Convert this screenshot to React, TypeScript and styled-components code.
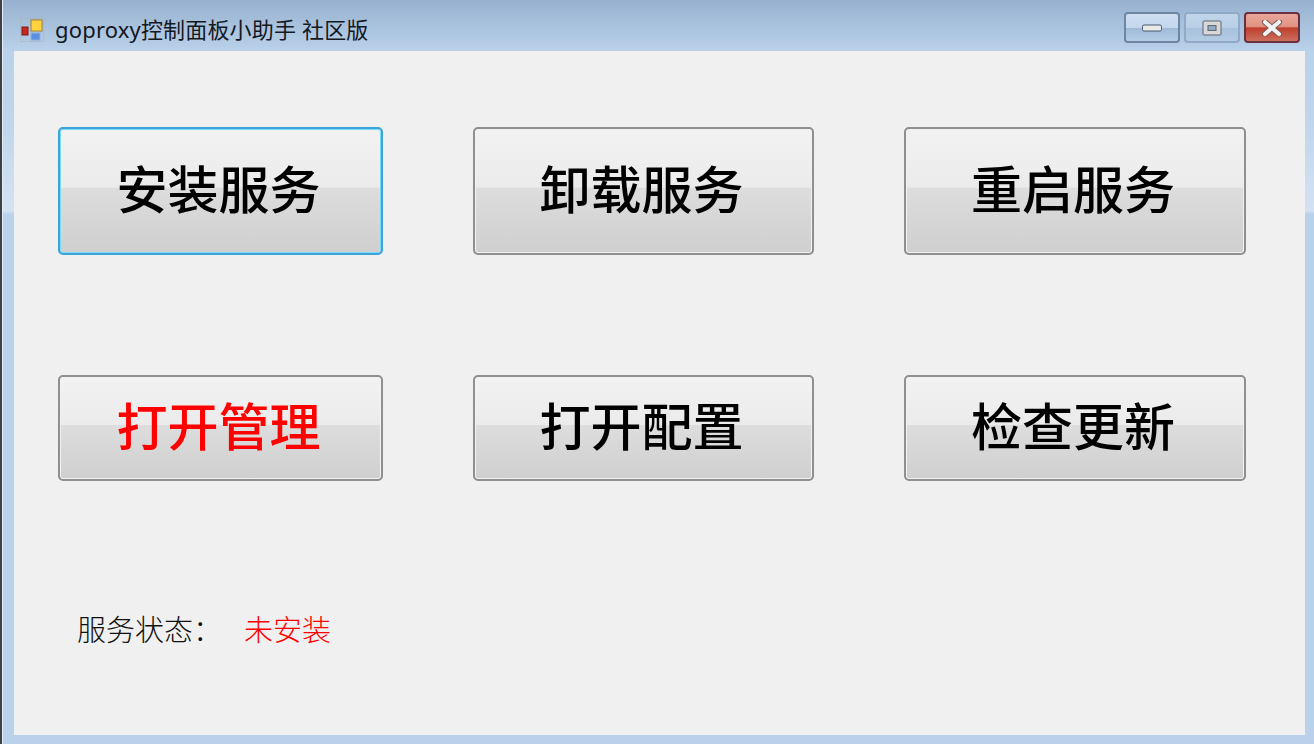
import React from 'react';
import styled, { createGlobalStyle } from 'styled-components';

const GlobalStyle = createGlobalStyle`
  html, body {
    margin: 0;
    padding: 0;
    background: #b9d1ea;
  }
`

const Window = styled.div`
  display: flex;
  flex-direction: column;
  box-sizing: border-box;
  width: 1314px;
  height: 744px;
  overflow: hidden;
  padding: 0 9px 9px 14px;
  box-shadow: inset 2px 0 0 #3c4248, inset 3px 0 0 #e4edf6;
  background: linear-gradient(180deg, #97b1cf 0, #b9d1ea 51px, #bfd5ec 120px, #d3e2f3 211px, #b9d1ea 214px);
`

const TitleBar = styled.div`
  display: flex;
  align-items: center;
  flex: none;
  height: 51px;
  margin-left: -14px;
  margin-right: -9px;
  padding: 8px 14px 0 20px;
  box-sizing: border-box;
`

const AppIcon = styled.svg`
  flex: none;
  width: 24px;
  height: 24px;
`

const Title = styled.div`
  flex: 1;
  margin-left: 11px;
  margin-top: -3px;
  font-family: "Noto Sans", "Noto Sans CJK SC", sans-serif;
  font-size: 22px;
  letter-spacing: 0.17px;
  color: #14181f;
  white-space: nowrap;
`

const Controls = styled.div`
  display: flex;
  gap: 4px;
  margin-top: -4px;
`

const ControlButton = styled.div<{ $close?: boolean; $dim?: boolean }>`
  display: flex;
  align-items: center;
  justify-content: center;
  box-sizing: border-box;
  width: 56px;
  height: 31px;
  border-radius: 4px;
  border: 2px solid ${p => (p.$close ? '#6b3040' : p.$dim ? '#8fa9c6' : '#6d86a3')};
  background: ${p =>
    p.$close
      ? 'linear-gradient(180deg, #e8a698 0, #e09384 46%, #bf3f2c 52%, #cc6f5e 100%)'
      : p.$dim
        ? 'linear-gradient(180deg, #c2d5ea 0, #b8cfe7 50%, #a8c1dc 52%, #b3cbe4 100%)'
        : 'linear-gradient(180deg, #cfdff0 0, #c3d7ed 50%, #9fbad8 52%, #b5cde6 100%)'};
`

const ControlIcon = styled.svg`
  display: block;
`

const Client = styled.main`
  flex: 1;
  box-sizing: border-box;
  padding: 76px 59px 0 44px;
  background: #f0f0f0;
`

const ButtonGrid = styled.div`
  display: grid;
  grid-template-columns: 325px 341px 342px;
  grid-template-rows: 128px 106px;
  column-gap: 90px;
  row-gap: 120px;
`

const ActionButton = styled.button<{ $focused?: boolean; $danger?: boolean }>`
  padding: 0 4px 8px 0;
  margin: 0;
  border-radius: 5px;
  border: 2px solid ${p => (p.$focused ? '#3aa3d8' : '#8f8f8f')};
  box-shadow: inset 0 0 0 1px ${p => (p.$focused ? '#7fdcf8' : '#f2f2f2')};
  background: linear-gradient(180deg, #f2f2f2 0, #ebebeb 47%, #dddddd 47.5%, #cfcfcf 100%);
  font-family: "Noto Sans CJK SC", serif;
  font-size: 51px;
  font-weight: 500;
  line-height: 1;
  color: ${p => (p.$danger ? '#ff0000' : '#000000')};
`

const StatusRow = styled.div`
  display: flex;
  margin-top: 126px;
  margin-left: 19px;
  font-family: "Noto Sans CJK SC", sans-serif;
  font-size: 29px;
  line-height: 42px;
  font-weight: 300;
  color: #111111;
`

const StatusLabel = styled.span`
  width: 167px;
`

const StatusValue = styled.span`
  color: #ff0000;
`

const App = () => {
  return (
    <>
      <GlobalStyle />
      <Window>
        <TitleBar>
          <AppIcon viewBox="0 0 24 24">
            <rect x="0.5" y="0.5" width="23" height="23" fill="none" stroke="#a9b4bf" strokeWidth="0.6" />
            <rect x="2" y="9" width="6" height="8" fill="#c8261c" stroke="#7d1a14" />
            <rect x="11" y="2" width="11" height="11" fill="#ffd23f" stroke="#a8842a" />
            <rect x="11" y="15" width="9" height="7" fill="#5b8fe0" stroke="#8fb0e0" />
          </AppIcon>
          <Title>goproxy控制面板小助手 社区版</Title>
          <Controls>
            <ControlButton>
              <ControlIcon width="20" height="8" viewBox="0 0 20 8">
                <rect x="0.5" y="1" width="19" height="6" rx="1.5" fill="#e8e8e8" stroke="#4a5a6c" />
              </ControlIcon>
            </ControlButton>
            <ControlButton $dim>
              <ControlIcon width="20" height="16" viewBox="0 0 20 16">
                <rect x="1" y="1" width="18" height="14" rx="1" fill="#d8d8d8" stroke="#5c6672" />
                <rect x="6" y="5.5" width="8" height="5" fill="#8fa9c6" stroke="#5c6672" />
              </ControlIcon>
            </ControlButton>
            <ControlButton $close>
              <ControlIcon width="22" height="16" viewBox="0 0 22 16">
                <path d="M4 2 L18 14 M18 2 L4 14" stroke="#7a5a5a" strokeWidth="6" strokeLinecap="round" />
                <path d="M4 2 L18 14 M18 2 L4 14" stroke="#f2f2f2" strokeWidth="4" strokeLinecap="round" />
              </ControlIcon>
            </ControlButton>
          </Controls>
        </TitleBar>
        <Client>
          <ButtonGrid>
            <ActionButton $focused>安装服务</ActionButton>
            <ActionButton>卸载服务</ActionButton>
            <ActionButton>重启服务</ActionButton>
            <ActionButton $danger>打开管理</ActionButton>
            <ActionButton>打开配置</ActionButton>
            <ActionButton>检查更新</ActionButton>
          </ButtonGrid>
          <StatusRow>
            <StatusLabel>服务状态：</StatusLabel>
            <StatusValue>未安装</StatusValue>
          </StatusRow>
        </Client>
      </Window>
    </>
  )
}

export default App;
